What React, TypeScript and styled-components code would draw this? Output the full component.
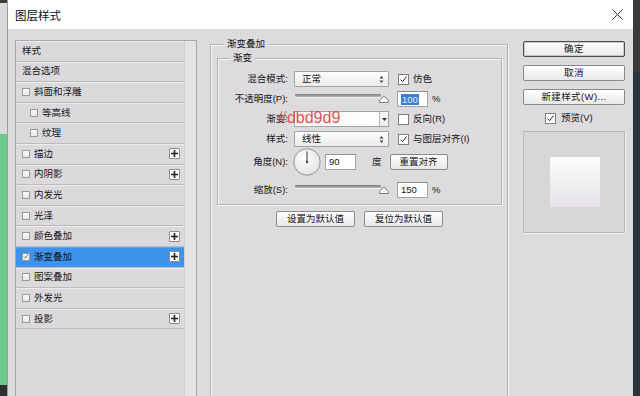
import styled, { createGlobalStyle } from "styled-components";

const UI_FONT = `"Liberation Sans", "Noto Sans CJK SC", sans-serif`;
const PANEL_BG = "#dedbdf";

const GlobalStyle = createGlobalStyle`
  html, body {
    margin: 0;
    padding: 0;
    background: #2c3440;
  }
  * {
    box-sizing: border-box;
  }
`;

interface LayerEffect {
  label: string;
  header?: boolean;
  indent?: boolean;
  plus?: boolean;
  selected?: boolean;
  checked?: boolean;
}

const effects: LayerEffect[] = [
  { label: "样式", header: true },
  { label: "混合选项", header: true },
  { label: "斜面和浮雕" },
  { label: "等高线", indent: true },
  { label: "纹理", indent: true },
  { label: "描边", plus: true },
  { label: "内阴影", plus: true },
  { label: "内发光" },
  { label: "光泽" },
  { label: "颜色叠加", plus: true },
  { label: "渐变叠加", plus: true, selected: true, checked: true },
  { label: "图案叠加" },
  { label: "外发光" },
  { label: "投影", plus: true },
];

const CheckMark = ({ size = 11 }: { size?: number }) => (
  <svg width={size} height={size} viewBox="0 0 11 11" fill="none">
    <path d="M2 5.6 L4.4 8.2 L9.2 1.8" stroke="#2a2a2a" strokeWidth="1.2" />
  </svg>
);

const SpinArrows = () => (
  <svg width="5" height="9" viewBox="0 0 5 9">
    <path d="M0.5 3.5 L2.5 1 L4.5 3.5 Z" fill="#444" />
    <path d="M0.5 5.5 L2.5 8 L4.5 5.5 Z" fill="#444" />
  </svg>
);

const SliderThumb = () => (
  <svg width="10" height="8" viewBox="0 0 10 8">
    <path d="M0.5 7.5 L0.5 5.5 L5 0.8 L9.5 5.5 L9.5 7.5 Z" fill="#f4f4f4" stroke="#7e7e7e" />
  </svg>
);

export default function App() {
  return (
    <>
      <GlobalStyle />
      <St.Screen>
        <St.EdgeLeft />
        <St.Dialog>
          <St.TitleBar>
            <St.Title>图层样式</St.Title>
            <svg width="11" height="11" viewBox="0 0 11 11">
              <path d="M0.5 0.5 L10.5 10.5 M10.5 0.5 L0.5 10.5" stroke="#333" strokeWidth="1" />
            </svg>
          </St.TitleBar>

          <St.Body>
            {/* 左侧效果列表 */}
            <St.StyleList>
              <St.ListItems>
                {effects.map((fx) => (
                  <St.ListItem key={fx.label} $indent={fx.indent} $selected={fx.selected}>
                    {!fx.header && (
                      <St.ListCheck>{fx.checked && <CheckMark size={9} />}</St.ListCheck>
                    )}
                    <St.ListText>{fx.label}</St.ListText>
                    {fx.plus && (
                      <St.PlusButton>
                        <svg width="7" height="7" viewBox="0 0 7 7">
                          <path d="M3.5 0 V7 M0 3.5 H7" stroke="#222" strokeWidth="1.6" />
                        </svg>
                      </St.PlusButton>
                    )}
                  </St.ListItem>
                ))}
              </St.ListItems>
              <St.ScrollTrack />
            </St.StyleList>

            {/* 渐变叠加 设置 */}
            <St.Group $outer>
              <St.GroupLegend $offset={7}>渐变叠加</St.GroupLegend>
              <St.Group>
                <St.GroupLegend $offset={12}>渐变</St.GroupLegend>

                <St.FormRow>
                  <St.FieldLabel>混合模式:</St.FieldLabel>
                  <St.Select>
                    正常
                    <SpinArrows />
                  </St.Select>
                  <St.OptionCheck>
                    <St.CheckBox>
                      <CheckMark />
                    </St.CheckBox>
                    仿色
                  </St.OptionCheck>
                </St.FormRow>

                <St.FormRow>
                  <St.FieldLabel>不透明度(P):</St.FieldLabel>
                  <St.SliderBox>
                    <St.SliderTrack />
                    <St.ThumbSpot>
                      <SliderThumb />
                    </St.ThumbSpot>
                  </St.SliderBox>
                  <St.NumberInput>
                    <St.Highlight>100</St.Highlight>
                  </St.NumberInput>
                  <St.Unit>%</St.Unit>
                </St.FormRow>

                <St.FormRow>
                  <St.FieldLabel>渐变:</St.FieldLabel>
                  <St.GradientPicker>
                    <St.GradientPreview />
                    <St.PickerArrow>
                      <svg width="5" height="3" viewBox="0 0 5 3">
                        <path d="M0 0 H5 L2.5 3 Z" fill="#333" />
                      </svg>
                    </St.PickerArrow>
                  </St.GradientPicker>
                  <St.OptionCheck>
                    <St.CheckBox />
                    反向(R)
                  </St.OptionCheck>
                  <St.ColorNote>#dbd9d9</St.ColorNote>
                </St.FormRow>

                <St.FormRow>
                  <St.FieldLabel>样式:</St.FieldLabel>
                  <St.Select>
                    线性
                    <SpinArrows />
                  </St.Select>
                  <St.OptionCheck>
                    <St.CheckBox>
                      <CheckMark />
                    </St.CheckBox>
                    与图层对齐(I)
                  </St.OptionCheck>
                </St.FormRow>

                <St.FormRow $height={26} $gapBelow={5}>
                  <St.FieldLabel>角度(N):</St.FieldLabel>
                  <St.Dial width="28" height="28" viewBox="0 0 28 28">
                    <defs>
                      <radialGradient id="dialFill" cx="40%" cy="35%" r="70%">
                        <stop offset="0%" stopColor="#ffffff" />
                        <stop offset="100%" stopColor="#e2e0e3" />
                      </radialGradient>
                    </defs>
                    <circle cx="14" cy="14" r="13.2" fill="url(#dialFill)" stroke="#8e8c8f" strokeWidth="0.9" />
                    <path d="M14 14 V3.5" stroke="#444" strokeWidth="1.1" />
                    <circle cx="14" cy="14" r="1.2" fill="#444" />
                  </St.Dial>
                  <St.NumberInput $gap={4}>90</St.NumberInput>
                  <St.Unit $gap={16}>度</St.Unit>
                  <St.PushButton $width={58} $gap={8}>
                    重置对齐
                  </St.PushButton>
                </St.FormRow>

                <St.FormRow>
                  <St.FieldLabel>缩放(S):</St.FieldLabel>
                  <St.SliderBox>
                    <St.SliderTrack />
                    <St.ThumbSpot>
                      <SliderThumb />
                    </St.ThumbSpot>
                  </St.SliderBox>
                  <St.NumberInput>150</St.NumberInput>
                  <St.Unit>%</St.Unit>
                </St.FormRow>
              </St.Group>

              <St.DefaultsRow>
                <St.PushButton $width={79}>设置为默认值</St.PushButton>
                <St.PushButton $width={79}>复位为默认值</St.PushButton>
              </St.DefaultsRow>
            </St.Group>

            {/* 右侧按钮 */}
            <St.SideColumn>
              <St.SideButton $primary>确定</St.SideButton>
              <St.SideButton>取消</St.SideButton>
              <St.SideButton>新建样式(W)...</St.SideButton>
              <St.PreviewToggle>
                <St.CheckBox>
                  <CheckMark />
                </St.CheckBox>
                预览(V)
              </St.PreviewToggle>
              <St.PreviewBox>
                <St.PreviewSwatch />
              </St.PreviewBox>
            </St.SideColumn>
          </St.Body>
        </St.Dialog>
        <St.EdgeRight />
      </St.Screen>
    </>
  );
}

const St = {
  Screen: styled.div`
    display: flex;
    width: 640px;
    height: 396px;
    overflow: hidden;
    font-family: ${UI_FONT};
    color: #151515;
  `,
  EdgeLeft: styled.div`
    width: 7px;
    flex-shrink: 0;
    background: linear-gradient(
      to bottom,
      #3c3c3c 0 3px,
      #d9d9d9 3px 134px,
      #6bc98a 134px 385px,
      #2f2f2f 385px
    );
  `,
  EdgeRight: styled.div`
    width: 7px;
    flex-shrink: 0;
    background: linear-gradient(to bottom, #3a3a3a 0 72px, #2c3440 72px);
  `,
  Dialog: styled.div`
    width: 626px;
    flex-shrink: 0;
    display: flex;
    flex-direction: column;
    border-left: 1px solid #9c9c9c;
  `,
  TitleBar: styled.div`
    height: 29px;
    flex-shrink: 0;
    background: #ffffff;
    display: flex;
    align-items: center;
    justify-content: space-between;
    padding: 0 10px 0 7px;
  `,
  Title: styled.span`
    font-size: 11.5px;
    color: #0a0a0a;
  `,
  Body: styled.div`
    flex: 1;
    min-height: 0;
    overflow: hidden;
    display: flex;
    align-items: flex-start;
    padding: 10px 8px 0 7px;
    background: ${PANEL_BG};
  `,
  StyleList: styled.div`
    width: 182px;
    height: 370px;
    margin-top: 1px;
    flex-shrink: 0;
    display: flex;
    border: 1px solid #a9a7aa;
    border-bottom: none;
    background: #dcd9dc;
  `,
  ListItems: styled.div`
    width: 168px;
    display: flex;
    flex-direction: column;
  `,
  ListItem: styled.div<{ $indent?: boolean; $selected?: boolean }>`
    height: 20.6px;
    flex-shrink: 0;
    display: flex;
    align-items: center;
    padding-left: ${({ $indent }) => ($indent ? 14 : 6)}px;
    background: ${({ $selected }) => ($selected ? "#3f92ea" : "#dcd9dc")};
    border-bottom: 1px solid #bcbabd;
    box-shadow: inset 0 1px 0 ${({ $selected }) => ($selected ? "#5aa3ef" : "#edebee")};
  `,
  ListCheck: styled.span`
    width: 8px;
    height: 8px;
    margin-right: 4px;
    flex-shrink: 0;
    display: flex;
    align-items: center;
    justify-content: center;
    border: 1px solid #9a989b;
    background: linear-gradient(#fafafa, #e9e9e9);
    overflow: visible;
  `,
  ListText: styled.span`
    font-size: 9.5px;
    line-height: 12px;
  `,
  PlusButton: styled.span`
    margin-left: auto;
    margin-right: 4px;
    width: 11px;
    height: 11px;
    display: flex;
    align-items: center;
    justify-content: center;
    border: 1px solid #8d8b8e;
    border-radius: 1px;
    background: #fbfbfb;
  `,
  ScrollTrack: styled.div`
    width: 12px;
    background: #e5e3e6;
    border-left: 1px solid #d0ced1;
  `,
  Group: styled.fieldset<{ $outer?: boolean }>`
    margin: ${({ $outer }) => ($outer ? "-1px 0 0 13px" : "0")};
    width: ${({ $outer }) => ($outer ? "298px" : "auto")};
    height: ${({ $outer }) => ($outer ? "370px" : "auto")};
    flex-shrink: 0;
    min-width: 0;
    padding: ${({ $outer }) => ($outer ? "2px 5px 0 6px" : "5px 0 4px 0")};
    border: 1px solid #b3b1b4;
    box-shadow: inset 1px 1px 0 #f7f6f8, 1px 1px 0 #f7f6f8;
  `,
  GroupLegend: styled.legend<{ $offset: number }>`
    margin-left: ${({ $offset }) => $offset}px;
    padding: 0 3px;
    font-size: 9.5px;
    line-height: 12px;
    background: ${PANEL_BG};
    color: #111;
  `,
  FormRow: styled.div<{ $height?: number; $gapBelow?: number }>`
    position: relative;
    height: ${({ $height }) => $height ?? 20}px;
    margin-bottom: ${({ $gapBelow }) => $gapBelow ?? 0}px;
    display: flex;
    align-items: center;
    font-size: 9.5px;
  `,
  FieldLabel: styled.span`
    width: 70px;
    margin-right: 6px;
    flex-shrink: 0;
    text-align: right;
    white-space: nowrap;
    line-height: 12px;
  `,
  Select: styled.div`
    width: 95px;
    height: 16px;
    flex-shrink: 0;
    display: flex;
    align-items: center;
    justify-content: space-between;
    padding: 0 4px 0 7px;
    border: 1px solid #a4a2a5;
    border-radius: 1px;
    background: linear-gradient(#fdfdfd, #ebebeb);
    line-height: 12px;
  `,
  OptionCheck: styled.span`
    margin-left: 9px;
    display: flex;
    align-items: center;
    gap: 4px;
    white-space: nowrap;
    line-height: 12px;
  `,
  CheckBox: styled.span`
    width: 11px;
    height: 11px;
    flex-shrink: 0;
    display: flex;
    align-items: center;
    justify-content: center;
    border: 1px solid #7f7d80;
    background: #fdfdfd;
  `,
  SliderBox: styled.div`
    position: relative;
    width: 95px;
    height: 20px;
    flex-shrink: 0;
    padding: 5px 8px 0 1px;
  `,
  SliderTrack: styled.div`
    height: 3px;
    border-radius: 1px;
    background: linear-gradient(#7a787b, #b9b7ba);
    box-shadow: 0 1px 0 #f3f2f4;
  `,
  ThumbSpot: styled.span`
    position: absolute;
    left: 85px;
    top: 6px;
    display: flex;
  `,
  NumberInput: styled.div<{ $gap?: number }>`
    width: 31px;
    height: 16px;
    flex-shrink: 0;
    margin-left: ${({ $gap }) => $gap ?? 8}px;
    display: flex;
    align-items: center;
    padding-left: 3px;
    border: 1px solid #a5a3a6;
    border-top-color: #8f8d90;
    background: #ffffff;
    line-height: 12px;
  `,
  Highlight: styled.span`
    background: #3b7fd6;
    color: #e6eefb;
    padding: 0 1px;
    line-height: 11px;
  `,
  Unit: styled.span<{ $gap?: number }>`
    margin-left: ${({ $gap }) => $gap ?? 4}px;
    line-height: 12px;
  `,
  GradientPicker: styled.div`
    width: 95px;
    height: 16px;
    flex-shrink: 0;
    display: flex;
    border: 1px solid #a4a2a5;
    background: #ffffff;
  `,
  GradientPreview: styled.div`
    flex: 1;
    margin: 1px;
    background: linear-gradient(to right, #f6eeee, #ffffff);
  `,
  PickerArrow: styled.div`
    width: 9px;
    display: flex;
    align-items: center;
    justify-content: center;
    border-left: 1px solid #b5b3b6;
    background: linear-gradient(#fdfdfd, #ececec);
  `,
  ColorNote: styled.span`
    position: absolute;
    left: 60px;
    top: 1px;
    font-family: "Liberation Sans", sans-serif;
    font-size: 16px;
    line-height: 16px;
    color: rgba(212, 62, 66, 0.88);
    pointer-events: none;
  `,
  Dial: styled.svg`
    margin-left: -1px;
    flex-shrink: 0;
  `,
  PushButton: styled.div<{ $width: number; $gap?: number }>`
    width: ${({ $width }) => $width}px;
    height: 16px;
    flex-shrink: 0;
    margin-left: ${({ $gap }) => $gap ?? 0}px;
    display: flex;
    align-items: center;
    justify-content: center;
    border: 1px solid #8b898c;
    border-radius: 2px;
    background: linear-gradient(#fefefe, #e8e7e9);
    font-size: 9.5px;
    line-height: 12px;
  `,
  DefaultsRow: styled.div`
    margin-top: 6px;
    display: flex;
    justify-content: center;
    gap: 9px;
  `,
  SideColumn: styled.div`
    width: 102px;
    margin-left: 15px;
    margin-top: 2px;
    flex-shrink: 0;
    display: flex;
    flex-direction: column;
  `,
  SideButton: styled.div<{ $primary?: boolean }>`
    height: 16px;
    margin-bottom: 8px;
    display: flex;
    align-items: center;
    justify-content: center;
    border: 1px solid ${({ $primary }) => ($primary ? "#4f4d50" : "#8b898c")};
    border-radius: 2px;
    background: linear-gradient(#fefefe, #e9e8ea);
    box-shadow: ${({ $primary }) => ($primary ? "inset 0 0 0 1px #c9c7ca" : "none")};
    font-size: 9.5px;
    line-height: 12px;
    letter-spacing: 0.4px;
    &:nth-child(3) {
      margin-bottom: 6px;
    }
  `,
  PreviewToggle: styled.div`
    height: 14px;
    padding-left: 22px;
    display: flex;
    align-items: center;
    gap: 5px;
    font-size: 9.5px;
    line-height: 12px;
  `,
  PreviewBox: styled.div`
    margin-top: 6px;
    height: 102px;
    display: flex;
    align-items: center;
    justify-content: center;
    border: 1px solid #b9b7ba;
    background: #d9d6da;
    box-shadow: 1px 1px 0 #f2f1f3;
  `,
  PreviewSwatch: styled.div`
    width: 50px;
    height: 50px;
    margin-left: 1px;
    background: linear-gradient(#fdfcfd, #e6e2e8);
  `,
};
